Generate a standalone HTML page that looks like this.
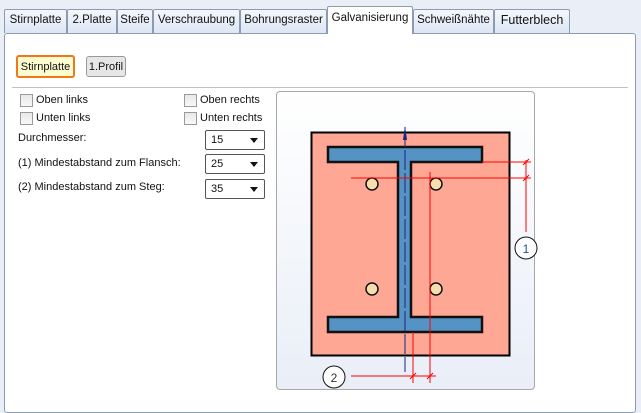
<!DOCTYPE html>
<html><head><style>
body{margin:0;width:641px;height:409px;background:#e9eef7;font-family:"Liberation Sans",sans-serif;font-size:11px;color:#111;position:relative;overflow:hidden}
.tab{position:absolute;top:9px;height:24px;border:1px solid #8d9bb0;border-bottom:none;background:linear-gradient(#f4f7fc,#dde6f4);box-sizing:border-box;text-align:center;line-height:20px;font-size:11.5px;border-radius:2px 2px 0 0;white-space:nowrap;overflow:hidden}
.sel{top:6px;height:28px;background:#fff;z-index:2;line-height:22px}
.panel{position:absolute;left:4px;top:33px;width:632px;height:380px;background:#fff;border:1px solid #8d9bb0;border-radius:3px;box-sizing:border-box}
.ab{position:absolute}
.cb{position:absolute;width:11px;height:11px;border:1px solid #9a9a9a;background:linear-gradient(#e8e8e8,#f8f8f8)}
.dd{position:absolute;left:205px;width:60px;height:20px;border:1px solid #555;border-radius:2px;box-sizing:border-box;background:#fff;line-height:19px;padding-left:5px}
.dd:after{content:"";position:absolute;right:6px;top:7px;border:4px solid transparent;border-top:5px solid #111}
</style></head><body>
<div class="tab" style="left:4px;width:63px">Stirnplatte</div>
<div class="tab" style="left:67px;width:50px">2.Platte</div>
<div class="tab" style="left:117px;width:36px">Steife</div>
<div class="tab" style="left:153px;width:87px">Verschraubung</div>
<div class="tab" style="left:240px;width:87px">Bohrungsraster</div>
<div class="tab sel" style="left:327px;width:86px">Galvanisierung</div>
<div class="tab" style="left:413px;width:81px">Schweißnähte</div>
<div class="tab" style="left:494px;width:76px;font-size:12.5px">Futterblech</div>
<div class="panel"></div>
<div class="ab" style="left:16px;top:55px;width:59px;height:23px;border:2px solid #f07818;border-radius:3px;background:#fdfbd0;box-sizing:border-box;text-align:center;line-height:20px">Stirnplatte</div>
<div class="ab" style="left:86px;top:56px;width:40px;height:21px;border:1px solid #999;border-radius:3px;background:#e6e6e6;box-sizing:border-box;text-align:center;line-height:20px">1.Profil</div>
<div class="ab" style="left:12px;top:87px;width:616px;height:1px;background:#c0c0c0"></div>
<div class="cb" style="left:20px;top:94px"></div><div class="ab" style="left:36px;top:94px">Oben links</div>
<div class="cb" style="left:20px;top:112px"></div><div class="ab" style="left:36px;top:112px">Unten links</div>
<div class="cb" style="left:184px;top:94px"></div><div class="ab" style="left:200px;top:94px">Oben rechts</div>
<div class="cb" style="left:184px;top:112px"></div><div class="ab" style="left:200px;top:112px">Unten rechts</div>
<div class="ab" style="left:18px;top:132px">Durchmesser:</div>
<div class="ab" style="left:18px;top:157px">(1) Mindestabstand zum Flansch:</div>
<div class="ab" style="left:18px;top:181px">(2) Mindestabstand zum Steg:</div>
<div class="dd" style="top:130px">15</div>
<div class="dd" style="top:154px">25</div>
<div class="dd" style="top:179px">35</div>
<div class="ab" style="left:276px;top:91px;width:259px;height:299px;border:1px solid #a8a8a8;border-radius:4px;box-sizing:border-box;background:linear-gradient(#fff,#e9eef7)"></div>
<svg class="ab" style="left:0;top:0" width="641" height="409">
<rect x="311.5" y="132.5" width="198" height="223" fill="#fea795" stroke="#000" stroke-width="2"/>
<path d="M328 147H482V162H411V317H482V332H328V317H398V162H328Z" fill="#5593c4" stroke="#111" stroke-width="2.5"/>
<g fill="#f6dfae" stroke="#111" stroke-width="1.5"><circle cx="372" cy="184" r="6"/><circle cx="436" cy="184" r="6"/><circle cx="372" cy="289" r="6"/><circle cx="436" cy="289" r="6"/></g>
<line x1="405" y1="127" x2="405" y2="372" stroke="#1a237e" stroke-width="1" stroke-dasharray="20,3"/>
<path d="M403 140L405 126L407 140Z" fill="#1a237e"/>
<g stroke="#f00" stroke-width="1" fill="none">
<line x1="482" y1="162" x2="531" y2="162"/><line x1="351" y1="178" x2="531" y2="178"/>
<line x1="526" y1="160" x2="526" y2="232"/>
<line x1="430" y1="172" x2="430" y2="383"/><line x1="413" y1="332" x2="413" y2="383"/>
<line x1="351" y1="376" x2="436" y2="376"/>
<path d="M523 165L529 159M523 181L529 175M410 379L416 373M427 379L433 373"/>
</g>
<circle cx="526" cy="248" r="11" fill="#fff" stroke="#111"/>
<text x="526" y="253" font-size="12" text-anchor="middle" font-family="Liberation Sans" fill="#1a4f9a">1</text>
<circle cx="334" cy="377" r="11" fill="#fff" stroke="#111"/>
<text x="334" y="382" font-size="12" text-anchor="middle" font-family="Liberation Sans" fill="#333">2</text>
</svg>
</body></html>
